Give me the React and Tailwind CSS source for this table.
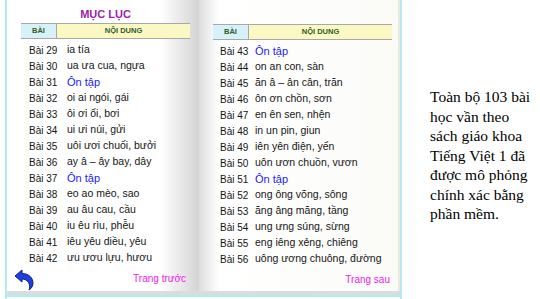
import React from 'react'

const LEFT = [
  ['Bài 29', 'ia tía'],
  ['Bài 30', 'ua ưa cua, ngựa'],
  ['Bài 31', 'Ôn tập', true],
  ['Bài 32', 'oi ai ngói, gái'],
  ['Bài 33', 'ôi ơi ổi, bơi'],
  ['Bài 34', 'ui ưi núi, gửi'],
  ['Bài 35', 'uôi ươi chuối, bưởi'],
  ['Bài 36', 'ay â – ây bay, dây'],
  ['Bài 37', 'Ôn tập', true],
  ['Bài 38', 'eo ao mèo, sao'],
  ['Bài 39', 'au âu cau, cầu'],
  ['Bài 40', 'iu êu rìu, phễu'],
  ['Bài 41', 'iêu yêu diều, yêu'],
  ['Bài 42', 'ưu ươu lựu, hươu'],
]

const RIGHT = [
  ['Bài 43', 'Ôn tập', true],
  ['Bài 44', 'on an con, sàn'],
  ['Bài 45', 'ăn â – ân cân, trăn'],
  ['Bài 46', 'ôn ơn chồn, sơn'],
  ['Bài 47', 'en ên sen, nhện'],
  ['Bài 48', 'in un pin, giun'],
  ['Bài 49', 'iên yên điện, yến'],
  ['Bài 50', 'uôn ươn chuồn, vươn'],
  ['Bài 51', 'Ôn tập', true],
  ['Bài 52', 'ong ông võng, sông'],
  ['Bài 53', 'ăng âng măng, tầng'],
  ['Bài 54', 'ung ưng súng, sừng'],
  ['Bài 55', 'eng iêng xẻng, chiêng'],
  ['Bài 56', 'uông ương chuông, đường'],
]

// ── Table header + rows for one page ─────────────────────────
function Lessons({ rows, idPad, textPad }) {
  return (
    <div>
      <div className="flex h-[16px] border-y border-[#a8a8a8] text-[7.5px] font-bold leading-[14px] text-[#2f5d2a]">
        <div className="w-[36px] shrink-0 bg-[#d6f1f7] border-r border-[#a8a8a8] text-center">BÀI</div>
        <div className="flex-1 bg-[#fbf8c4] text-center">NỘI DUNG</div>
      </div>
      <div className="pt-[3px]">
        {rows.map(([id, text, review]) => (
          <div key={id} className="flex h-[16px] items-center whitespace-nowrap text-[10px] text-[#151515]">
            <span className={`w-[36px] shrink-0 ${idPad}`}>{id}</span>
            <span className={`${textPad} ${review ? 'text-[#1a1aff] text-[11px]' : 'text-[10.5px]'}`}>{text}</span>
          </div>
        ))}
      </div>
    </div>
  )
}

function BackArrow() {
  return (
    <svg width="20" height="22" viewBox="0 0 20 22">
      <path
        d="M1 7 L8 1 L8 4.5 C15 4.5 19 9 19 14 C19 17 17.5 19.5 15 21 C16 18.5 16 16 14.5 13.5 C13 11 10.5 10 8 10 L8 13 Z"
        fill="#1f3ee0"
        stroke="#0c1d80"
        strokeWidth="1"
        strokeLinejoin="round"
      />
    </svg>
  )
}

export default function App() {
  return (
    <div className="w-[540px] h-[299px] bg-white flex font-['Liberation_Sans',sans-serif]">
      {/* Book */}
      <div className="ml-[5px] w-[397px] h-full flex flex-col border-l-2 border-r-2 border-[#b8e9ef]">
        <div className="flex h-[291px]">
          {/* Left page */}
          <div className="w-[192px] h-full flex flex-col bg-gradient-to-r from-white via-white via-80% to-[#d4d4d4] pl-[14px] pr-[9px]">
            <div className="h-[24px] pt-[7px] text-center text-[11px] font-bold leading-[14px] text-[#9a24a6]">MỤC LỤC</div>
            <Lessons rows={LEFT} idPad="pl-[8px]" textPad="pl-[10px]" />
            <div className="flex items-start justify-between mt-[3px] -ml-[7px] pr-[4px]">
              <BackArrow />
              <span className="text-[10px] text-[#f020f0] mt-[2px]">Trang trước</span>
            </div>
          </div>
          {/* Right page */}
          <div className="flex-1 h-full flex flex-col bg-gradient-to-r from-[#dedede] via-white via-10% to-[#fbfbf8] border-r-2 border-[#ece9e0] pl-[14px] pr-[6px]">
            <div className="h-[24px]" />
            <Lessons rows={RIGHT} idPad="pl-[7px]" textPad="pl-[6px]" />
            <div className="flex justify-end mt-[5px] pr-[2px]">
              <span className="text-[10px] text-[#f020f0]">Trang sau</span>
            </div>
          </div>
        </div>
        {/* Bottom edge */}
        <div className="h-[3px] bg-[#dcdcdc]" />
        <div className="h-[3px] bg-[#b8e9ef]" />
      </div>

      {/* Caption */}
      <div className="pl-[28px] pt-[87px] font-['Liberation_Serif',serif] text-[15.5px] leading-[19.5px] text-black whitespace-nowrap">
        Toàn bộ 103 bài<br />
        học vần theo<br />
        sách giáo khoa<br />
        Tiếng Việt 1 đã<br />
        được mô phỏng<br />
        chính xác bằng<br />
        phần mềm.
      </div>
    </div>
  )
}
